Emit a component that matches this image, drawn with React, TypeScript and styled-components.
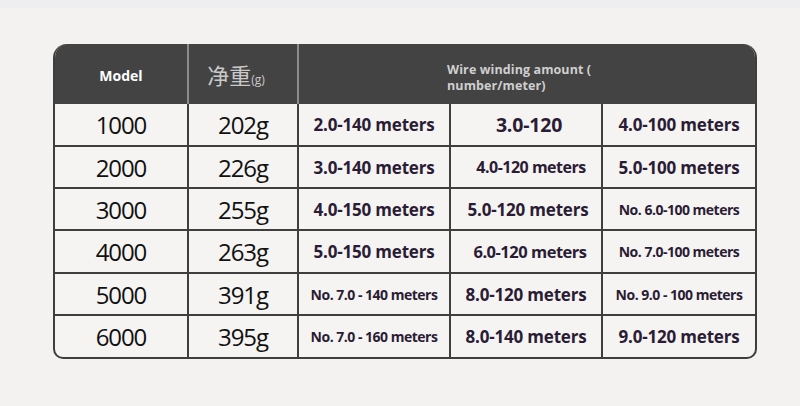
import React, { FC } from 'react';
import styled, { createGlobalStyle } from 'styled-components';

const GlobalStyle = createGlobalStyle`
  html, body {
    margin: 0;
    padding: 0;
    background: #f2f1ef;
  }
  #root {
    width: 800px;
    height: 406px;
  }
`;

const Page = styled.div`
  width: 800px;
  height: 406px;
  box-sizing: border-box;
  padding: 44px 0 0 53px;
  background: linear-gradient(#eeeef0 0, #eeeef0 8px, #f3f2f0 8px);
`;

const Table = styled.div`
  width: 704px;
  box-sizing: border-box;
  border: 2px solid #3e3e3e;
  border-top: none;
  border-radius: 14px 14px 10px 10px;
  overflow: hidden;
  display: grid;
  grid-template-columns: 134px 110px 152px 152px 152px;
  grid-template-rows: 60px 43px 42px 42px 43px 42px 41px;
  background: #f5f4f2;
`;

const HeadCell = styled.div<{ $span?: number; $last?: boolean }>`
  grid-column: span ${({ $span }) => $span ?? 1};
  background: #444343;
  border-right: ${({ $last }) => ($last ? 'none' : '2px solid #8c8c8c')};
  display: flex;
  align-items: center;
  justify-content: center;
  font-family: 'Open Sans', 'Noto Sans CJK SC', sans-serif;
`;

const ModelTitle = styled.span`
  color: #ffffff;
  font-weight: 700;
  font-size: 14px;
  padding-top: 2px;
`;

const WeightTitle = styled.span`
  color: #c9c9c9;
  font-size: 22px;
  font-family: 'Noto Sans CJK SC', sans-serif;
  margin-right: 14px;
  small {
    font-size: 12px;
    font-family: 'Open Sans', sans-serif;
  }
`;

const WireTitle = styled.span`
  align-self: flex-start;
  margin-top: 18px;
  margin-left: 148px;
  margin-right: auto;
  color: #cfcfcf;
  font-weight: 700;
  font-size: 12.5px;
  line-height: 16px;
  letter-spacing: 0.1px;
`;

const Cell = styled.div<{ $lastCol?: boolean; $lastRow?: boolean }>`
  border-right: ${({ $lastCol }) => ($lastCol ? 'none' : '2px solid #3e3e3e')};
  border-bottom: ${({ $lastRow }) => ($lastRow ? 'none' : '2px solid #3e3e3e')};
  display: flex;
  align-items: center;
  justify-content: center;
  font-family: 'Open Sans', sans-serif;
  white-space: nowrap;
  overflow: hidden;
`;

const Big = styled.span`
  font-size: 24px;
  letter-spacing: -1.1px;
  color: #111;
`;

const Meter = styled.span<{ $size: number; $shift?: number; $tight?: boolean }>`
  font-size: ${({ $size }) => $size}px;
  font-weight: 700;
  color: #2b1c35;
  letter-spacing: ${({ $tight }) => ($tight ? '-0.5px' : '-0.2px')};
  margin-left: ${({ $shift }) => $shift ?? 0}px;
`;

type MeterCell = { text: string; size: number; shift?: number; tight?: boolean };

const rows: { model: string; weight: string; meters: MeterCell[] }[] = [
  {
    model: '1000',
    weight: '202g',
    meters: [
      { text: '2.0-140 meters', size: 17 },
      { text: '3.0-120', size: 19.5, shift: 6 },
      { text: '4.0-100 meters', size: 17 },
    ],
  },
  {
    model: '2000',
    weight: '226g',
    meters: [
      { text: '3.0-140 meters', size: 17 },
      { text: '4.0-120 meters', size: 16, shift: 10, tight: true },
      { text: '5.0-100 meters', size: 17 },
    ],
  },
  {
    model: '3000',
    weight: '255g',
    meters: [
      { text: '4.0-150 meters', size: 17 },
      { text: '5.0-120 meters', size: 17, shift: 4 },
      { text: 'No. 6.0-100 meters', size: 14, tight: true },
    ],
  },
  {
    model: '4000',
    weight: '263g',
    meters: [
      { text: '5.0-150 meters', size: 17 },
      { text: '6.0-120 meters', size: 16.5, shift: 8, tight: true },
      { text: 'No. 7.0-100 meters', size: 14, tight: true },
    ],
  },
  {
    model: '5000',
    weight: '391g',
    meters: [
      { text: 'No. 7.0 - 140 meters', size: 14, tight: true },
      { text: '8.0-120 meters', size: 17 },
      { text: 'No. 9.0 - 100 meters', size: 14, tight: true },
    ],
  },
  {
    model: '6000',
    weight: '395g',
    meters: [
      { text: 'No. 7.0 - 160 meters', size: 14, tight: true },
      { text: '8.0-140 meters', size: 17 },
      { text: '9.0-120 meters', size: 17 },
    ],
  },
];

const App: FC = () => {
  return (
    <>
      <GlobalStyle />
      <Page>
        <Table>
          <HeadCell>
            <ModelTitle>Model</ModelTitle>
          </HeadCell>
          <HeadCell>
            <WeightTitle>
              净重<small>(g)</small>
            </WeightTitle>
          </HeadCell>
          <HeadCell $span={3} $last>
            <WireTitle>
              Wire winding amount (
              <br />
              number/meter)
            </WireTitle>
          </HeadCell>
          {rows.map((row, i) => {
            const lastRow = i === rows.length - 1;
            return (
              <React.Fragment key={row.model}>
                <Cell $lastRow={lastRow}>
                  <Big>{row.model}</Big>
                </Cell>
                <Cell $lastRow={lastRow}>
                  <Big>{row.weight}</Big>
                </Cell>
                {row.meters.map((m, j) => (
                  <Cell key={j} $lastRow={lastRow} $lastCol={j === 2}>
                    <Meter $size={m.size} $shift={m.shift} $tight={m.tight}>
                      {m.text}
                    </Meter>
                  </Cell>
                ))}
              </React.Fragment>
            );
          })}
        </Table>
      </Page>
    </>
  );
};

export default App;
